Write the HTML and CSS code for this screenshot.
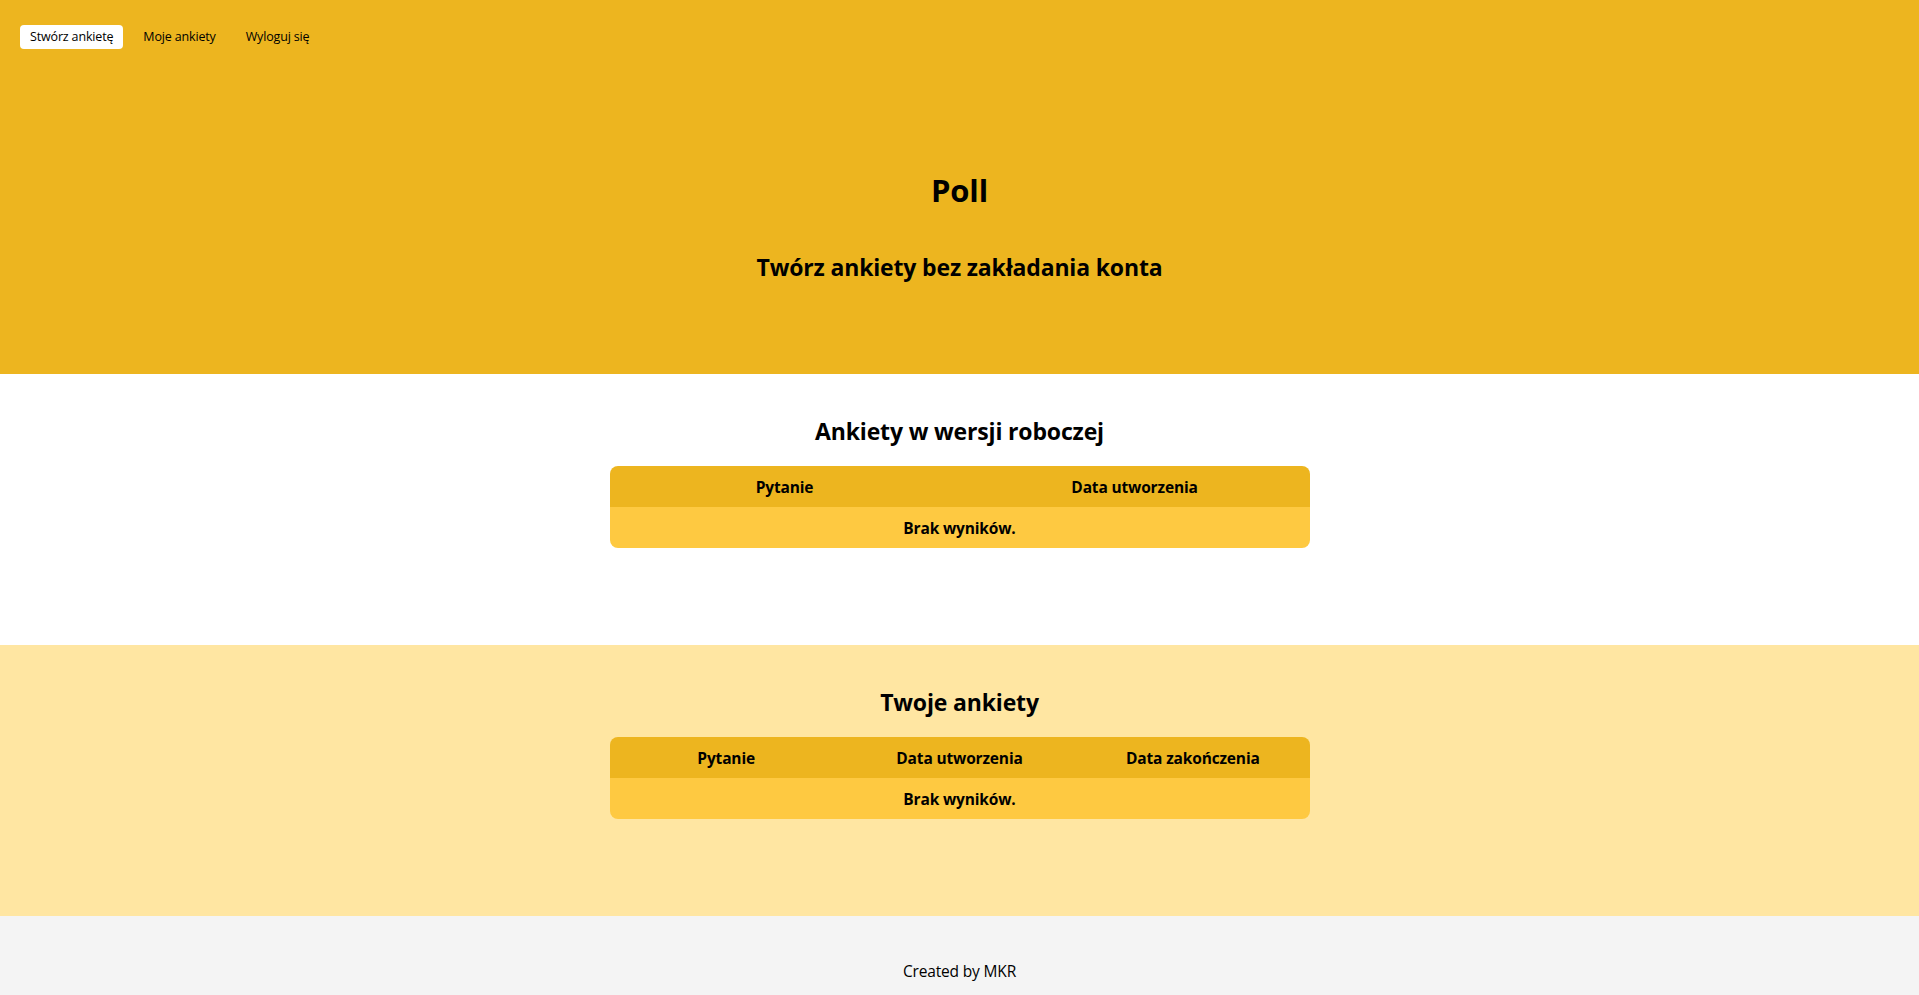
FILE: index.html
```html
<!DOCTYPE html>
<html lang="pl">
<head>
<meta charset="utf-8">
<title>Poll</title>
<link rel="stylesheet" href="styles.css">
</head>
<body>
<header class="hero">
  <nav class="nav">
    <a class="nav-link active" href="#">Stwórz ankietę</a>
    <a class="nav-link" href="#">Moje ankiety</a>
    <a class="nav-link" href="#">Wyloguj się</a>
  </nav>
  <div class="hero-body">
    <h1 class="hero-title">Poll</h1>
    <p class="hero-sub">Twórz ankiety bez zakładania konta</p>
  </div>
</header>
<main>
  <section class="block block-white">
    <h2 class="block-title">Ankiety w wersji roboczej</h2>
    <table class="polls">
      <thead>
        <tr><th>Pytanie</th><th>Data utworzenia</th></tr>
      </thead>
      <tbody>
        <tr><td colspan="2">Brak wyników.</td></tr>
      </tbody>
    </table>
  </section>
  <section class="block block-cream">
    <h2 class="block-title">Twoje ankiety</h2>
    <table class="polls">
      <thead>
        <tr><th>Pytanie</th><th>Data utworzenia</th><th>Data zakończenia</th></tr>
      </thead>
      <tbody>
        <tr><td colspan="3">Brak wyników.</td></tr>
      </tbody>
    </table>
  </section>
</main>
<footer class="footer">Created by MKR</footer>
</body>
</html>
```
FILE: styles.css
```css
* { box-sizing: border-box; }
html, body { margin: 0; padding: 0; }
body {
  font-family: "Open Sans", "Noto Sans", sans-serif;
  color: #000;
  background: #fff;
  letter-spacing: -0.01em;
  overflow: hidden;
}
.hero {
  background: #edb51f;
  padding-top: 25px;
}
.nav {
  display: flex;
  gap: 10px;
  padding-left: 20px;
}
.nav-link {
  display: block;
  padding: 4px 10px;
  font-size: 12.5px;
  line-height: 16px;
  color: #000;
  text-decoration: none;
  border-radius: 4px;
}
.nav-link.active { background: #fff; }
.hero-body {
  text-align: center;
  padding: 121px 0 91px;
}
.hero-title {
  margin: 0 0 41px;
  font-size: 31px;
  line-height: 40px;
  font-weight: 700;
}
.hero-sub {
  margin: 0;
  font-size: 23px;
  line-height: 32px;
  font-weight: 700;
}
.block {
  padding: 41px 0 97px;
  text-align: center;
}
.block-white { background: #fff; }
.block-cream { background: #ffe6a2; }
.block-title {
  margin: 0 0 19px;
  font-size: 23px;
  line-height: 32px;
  font-weight: 700;
}
.polls {
  width: 700px;
  margin: 0 auto;
  border-collapse: separate;
  border-spacing: 0;
  table-layout: fixed;
  border-radius: 8px;
  overflow: hidden;
}
.polls th, .polls td {
  height: 41px;
  padding: 0 8px;
  font-size: 15.5px;
  font-weight: 700;
  text-align: center;
  vertical-align: middle;
}
.polls th { background: #edb51f; }
.polls td { background: #fec941; }
.footer {
  height: 80px;
  padding-top: 43px;
  background: #f4f4f4;
  text-align: center;
  font-size: 15.5px;
  line-height: 24px;
}
```
